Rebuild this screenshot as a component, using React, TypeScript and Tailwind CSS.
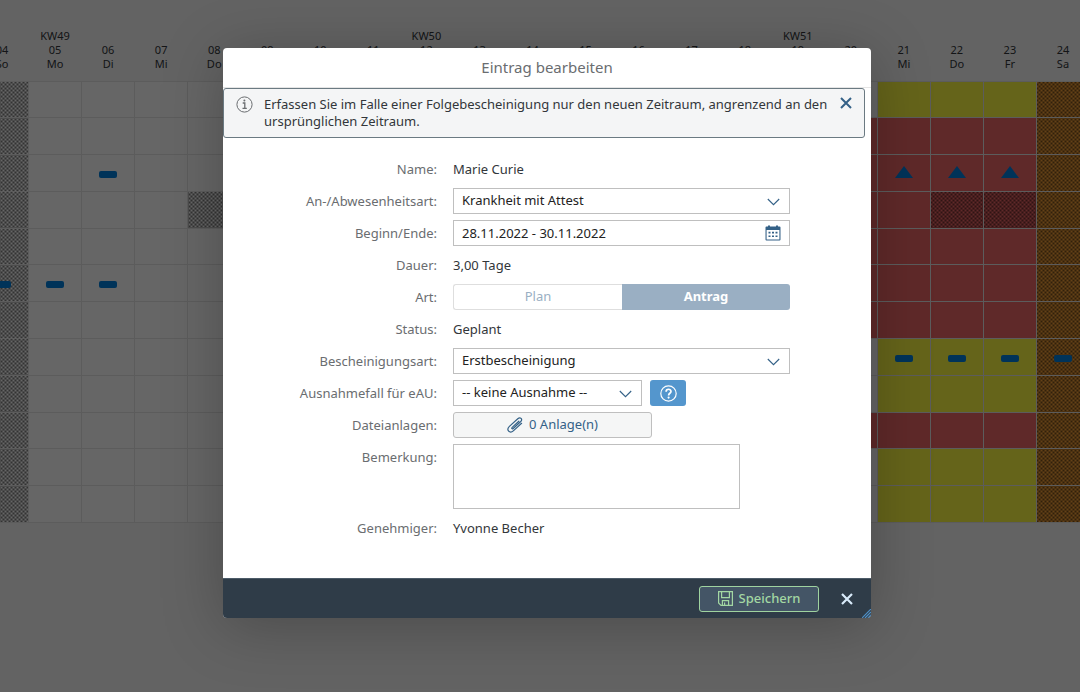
import type { ReactNode } from 'react'

const days = [
  ['', '04', 'So'], ['KW49', '05', 'Mo'], ['', '06', 'Di'], ['', '07', 'Mi'], ['', '08', 'Do'],
  ['', '09', 'Fr'], ['', '10', 'Sa'], ['', '11', 'So'], ['KW50', '12', 'Mo'], ['', '13', 'Di'],
  ['', '14', 'Mi'], ['', '15', 'Do'], ['', '16', 'Fr'], ['', '17', 'Sa'], ['', '18', 'So'],
  ['KW51', '19', 'Mo'], ['', '20', 'Di'], ['', '21', 'Mi'], ['', '22', 'Do'], ['', '23', 'Fr'],
  ['', '24', 'Sa'],
]

// y = yellow, r = red: colour of the days before Christmas, one letter per employee
const rows = 'yrrrrrryyryy'.split('')

const marks: Record<string, 'bar' | 'triangle'> = {
  '2-2': 'bar', '5-0': 'bar', '5-1': 'bar', '5-2': 'bar',
  '2-17': 'triangle', '2-18': 'triangle', '2-19': 'triangle',
  '7-17': 'bar', '7-18': 'bar', '7-19': 'bar', '7-20': 'bar',
}

const hatch = 'bg-[repeating-conic-gradient(#00000080_0_25%,transparent_0_50%)] bg-size-[4px_4px]'

function cellClass(row: number, col: number) {
  const weekend = days[col][2] === 'Sa' || days[col][2] === 'So'
  if (col === 20) return `bg-[#f9a339] ${hatch}`
  if (weekend) return `bg-white ${hatch}`
  let color = 'bg-white'
  if (col >= 17) color = rows[row] === 'y' ? 'bg-[#fcfa41]' : 'bg-[#ed6666]'
  if (col === 16 && rows[row] === 'r') color = 'bg-[#ed6666]'
  if (row === 3 && [4, 18, 19].includes(col)) return `${color} ${hatch}`
  return color
}

function Calendar() {
  return (
    <table className="-ml-[25px] mt-[29px] h-[494px] w-[1115px] table-fixed border-collapse">
      <thead>
        <tr className="h-[52px]">
          {days.map(([week, day, name]) => (
            <th key={day} className="p-0 align-top text-[11px] leading-[14px] font-normal text-[#32363a]">
              <div className="h-[14px]">{week}</div>
              <div>{day}</div>
              <div>{name}</div>
            </th>
          ))}
        </tr>
      </thead>
      <tbody>
        {rows.map((_, row) => (
          <tr key={row} className="h-9">
            {days.map(([, day], col) => {
              const mark = marks[`${row}-${col}`]
              return (
                <td key={day} className={`border border-[#e5e5e5] p-0 pb-[13px] align-bottom ${cellClass(row, col)}`}>
                  {mark === 'bar' && <div className="mx-auto h-[7px] w-[18px] rounded-xs bg-[#0080de]" />}
                  {mark === 'triangle' && (
                    <svg className="mx-auto h-3 w-[18px]" viewBox="0 0 18 12"><path d="M9 0L18 12H0z" fill="#0080de" /></svg>
                  )}
                </td>
              )
            })}
          </tr>
        ))}
      </tbody>
    </table>
  )
}

function Chevron() {
  return (
    <svg className="pointer-events-none absolute top-[10px] right-[10px] h-2 w-[13px]" viewBox="0 0 13 8" fill="none" stroke="#346187" strokeWidth="1.1">
      <path d="M.8 1L6.5 6.7L12.2 1" />
    </svg>
  )
}

function Label({ id, children }: { id?: string; children: ReactNode }) {
  return <label htmlFor={id} className="h-[26px] text-right leading-[26px] text-[#6a6d70]">{children}</label>
}

function Value({ children }: { children: ReactNode }) {
  return <div className="leading-[26px]">{children}</div>
}

function Select({ id, value, className }: { id: string; value: string; className: string }) {
  return (
    <div className={`relative h-[26px] ${className}`}>
      <select id={id} className="h-full w-full appearance-none border border-[#bfbfbf] bg-white px-2 text-[#222]">
        <option>{value}</option>
      </select>
      <Chevron />
    </div>
  )
}

export default function App() {
  return (
    <div className="relative min-h-screen overflow-hidden bg-[#f7f7f7] font-['Noto_Sans',sans-serif] text-[13px] text-[#32363a]">
      <div className="flow-root">
        <Calendar />
      </div>

      {/* Overlay */}
      <div className="absolute inset-0 flex items-start justify-center bg-black/60 pt-12 pl-[14px]">
        <div role="dialog" aria-labelledby="title" className="relative w-[648px] overflow-hidden rounded bg-white shadow-[0_8px_60px_rgba(0,0,0,0.25)]">
          <h1 id="title" className="h-10 border-b border-[#e5e5e5] text-center text-[15px] leading-[38px] text-[#6a6d70]">Eintrag bearbeiten</h1>

          {/* Message strip */}
          <div className="mr-[6px] flex items-start rounded-[3px] border border-[#6b7a82] bg-[#f4f5f6] py-[7px] pr-3 pl-3">
            <svg className="size-[17px] shrink-0" viewBox="0 0 17 17" fill="none" stroke="#6a6d70">
              <circle cx="8.5" cy="8.5" r="7.6" />
              <path d="M6.7 7H8.8V12.2M6.5 12.4H10.8" strokeWidth="1.3" />
              <circle cx="8.4" cy="4.6" r="1" fill="#6a6d70" stroke="none" />
            </svg>
            <p className="ml-[11px] flex-1 leading-[17px]">
              Erfassen Sie im Falle einer Folgebescheinigung nur den neuen Zeitraum, angrenzend an den ursprünglichen Zeitraum.
            </p>
            <button type="button" aria-label="Hinweis schließen" className="mt-px">
              <svg className="size-3" viewBox="0 0 12 12" stroke="#346187" strokeWidth="2"><path d="M1 1L11 11M11 1L1 11" /></svg>
            </button>
          </div>

          {/* Form */}
          <form className="grid grid-cols-[214px_1fr] gap-x-4 gap-y-[6px] pt-[18px] pr-[81px] pb-[37px]">
            <Label>Name:</Label>
            <Value>Marie Curie</Value>
            <Label id="type">An-/Abwesenheitsart:</Label>
            <Select id="type" value="Krankheit mit Attest" className="w-full" />
            <Label id="range">Beginn/Ende:</Label>
            <div className="relative h-[26px]">
              <input id="range" defaultValue="28.11.2022 - 30.11.2022" className="h-full w-full border border-[#bfbfbf] px-2 text-[#222]" />
              <svg className="pointer-events-none absolute top-[5px] right-[9px] size-4" viewBox="0 0 16 16" fill="#346187">
                <path d="M1.5 1.5H3V.5H5V1.5H11V.5H13V1.5H14.5Q15.5 1.5 15.5 2.5V14.5Q15.5 15.5 14.5 15.5H1.5Q.5 15.5 .5 14.5V2.5Q.5 1.5 1.5 1.5zM1.6 5V14.4H14.4V5z" fillRule="evenodd" />
                <path d="M3.5 6.8h2v1.6h-2zM7 6.8h2v1.6H7zM10.5 6.8h2v1.6h-2zM3.5 10.4h2V12h-2zM7 10.4h2V12H7zM10.5 10.4h2V12h-2z" />
              </svg>
            </div>
            <Label>Dauer:</Label>
            <Value>3,00 Tage</Value>
            <Label>Art:</Label>
            <div className="flex h-[26px]">
              <button type="button" className="flex-1 rounded-l-[3px] border border-r-0 border-[#dedede] text-[#9aafc3]">Plan</button>
              <button type="button" className="flex-1 rounded-r-[3px] bg-[#9aafc3] font-bold text-white">Antrag</button>
            </div>
            <Label>Status:</Label>
            <Value>Geplant</Value>
            <Label id="cert">Bescheinigungsart:</Label>
            <Select id="cert" value="Erstbescheinigung" className="w-full" />
            <Label id="exception">Ausnahmefall für eAU:</Label>
            <div className="flex gap-2">
              <Select id="exception" value="-- keine Ausnahme --" className="w-[189px]" />
              <button type="button" aria-label="Hilfe" className="flex h-[26px] w-9 items-center justify-center rounded-[3px] bg-[#5496cd]">
                <svg className="size-[17px]" viewBox="0 0 17 17" fill="none" stroke="white" strokeWidth="1.2">
                  <circle cx="8.5" cy="8.5" r="7.7" />
                  <path d="M6.1 6.7C6.1 3.5 11 3.5 11 6.5C11 8.4 8.6 8.2 8.6 10.4" strokeWidth="1.7" />
                  <circle cx="8.6" cy="12.6" r="1.1" fill="white" stroke="none" />
                </svg>
              </button>
            </div>
            <Label id="files">Dateianlagen:</Label>
            <button id="files" type="button" className="flex h-[26px] w-[199px] items-center justify-center gap-[6px] rounded-[3px] border border-[#bfbfbf] bg-[#f5f6f6] text-[#346187]">
              <svg className="size-4" viewBox="0 0 16 16" fill="none" stroke="currentColor" strokeWidth="1.2" strokeLinecap="round">
                <path d="M11.8 4.2L5.2 10.4C4.2 11.4 5.2 12.4 6.2 11.5L13.5 4.8C16.2 2 13.2-.5 10.8 1.7L2.4 9.4C-1.2 12.8 2.8 17.2 6.3 13.9L14.6 6.3" />
              </svg>
              0 Anlage(n)
            </button>
            <Label id="note">Bemerkung:</Label>
            <textarea id="note" className="block h-[65px] w-[287px] resize-none border border-[#bfbfbf] p-2" />
            <Label>Genehmiger:</Label>
            <Value>Yvonne Becher</Value>
          </form>

          {/* Footer */}
          <div className="flex h-10 items-center justify-end gap-[22px] border-t border-[#4c5b68] bg-[#2f3c48] pr-[18px]">
            <button type="button" className="flex h-[26px] w-[120px] items-center justify-center gap-[6px] rounded-[3px] border border-[#9fd3a0] bg-[#445566] font-medium text-[#a3d7a3]">
              <svg className="size-[15px]" viewBox="0 0 15 15" fill="none" stroke="currentColor" strokeWidth="1.2">
                <path d="M.6 .6H14.4V14.4H3L.6 12zM3.6 .6V6.6H11.4V.6M4.4 14.4V9.6H10.6V14.4M6.6 14V11.6" />
              </svg>
              Speichern
            </button>
            <button type="button" aria-label="Schließen">
              <svg className="size-3" viewBox="0 0 12 12" stroke="#d9ebfa" strokeWidth="2.2"><path d="M1 1L11 11M11 1L1 11" /></svg>
            </button>
          </div>
          <svg className="absolute right-0 bottom-0 size-[9px]" viewBox="0 0 9 9" stroke="#4f8fc4" strokeWidth="1.2">
            <path d="M0 9L9 0M3 9L9 3M6 9L9 6" />
          </svg>
        </div>
      </div>
    </div>
  )
}
